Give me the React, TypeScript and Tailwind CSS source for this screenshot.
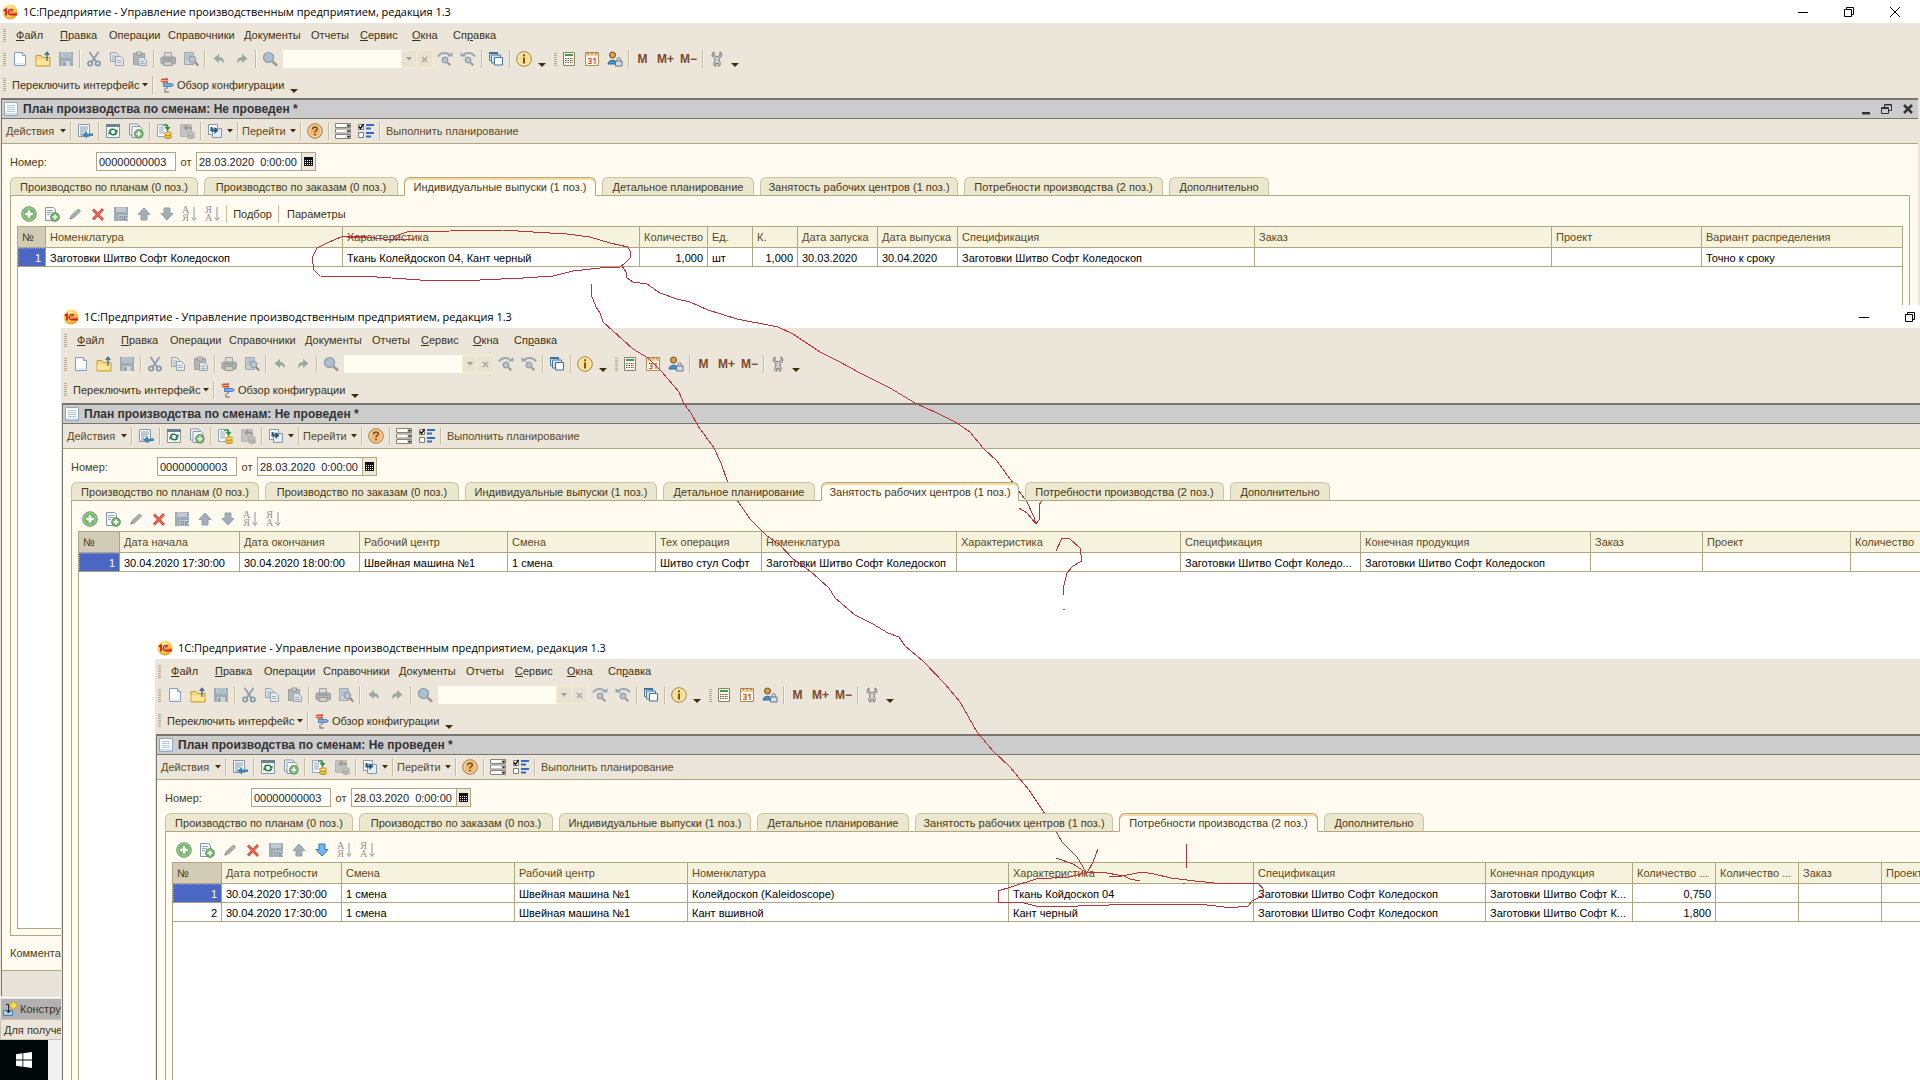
import React, { ReactNode } from "react";

/* ---------- icons ---------- */

function Svg({ children, size = "size-4" }: { children: ReactNode; size?: string }) {
  return (
    <svg viewBox="0 0 16 16" className={`${size} shrink-0`} fill="none" aria-hidden="true">
      {children}
    </svg>
  );
}

const Logo = () => (
  <Svg>
    <defs>
      <radialGradient id="logoFill" cx="0.4" cy="0.3" r="0.8">
        <stop offset="0" stopColor="#fff3b0" />
        <stop offset="0.6" stopColor="#fbc94a" />
        <stop offset="1" stopColor="#d98a2b" />
      </radialGradient>
    </defs>
    <circle cx="8" cy="8" r="7.5" fill="url(#logoFill)" />
    <path d="M1.800 6.800 4 5.200v6.300" stroke="#d6201c" strokeWidth="1.800" />
    <path d="M11.200 6.600A2.800 2.600 0 1 0 9 10.800h6" stroke="#d6201c" strokeWidth="1.500" />
    <path d="M10.300 7.800A1.100 1.100 0 1 0 9 9.200h6" stroke="#d6201c" strokeWidth="0.900" />
  </Svg>
);
const NewDoc = () => (
  <Svg>
    <path d="M2.500 1.500h8l3 3v10h-11z" fill="#fdfeff" stroke="#7f9fbd" />
    <path d="M10.500 1.500v3h3" fill="#d5e4f2" stroke="#7f9fbd" />
    <path d="M4 12h8v1.500H4z" fill="#dce9f5" />
  </Svg>
);
const OpenDoc = () => (
  <Svg>
    <path d="M1 4.500h5l1.500 2H15V15H1z" fill="#f7d774" stroke="#c99a35" />
    <path d="M1.500 8.500H14V14H1.500z" fill="#fce79c" />
    <path d="M12 10V2M9.800 4 12 1.300 14.200 4" stroke="#3e6a86" strokeWidth="1.300" />
  </Svg>
);
const Save = () => (
  <Svg>
    <path d="M1 1h14v14H1z" fill="#9eacb8" />
    <path d="M3 1.500h10v5H3z" fill="#c8cfd5" />
    <path d="M4 3h8M4 5h8" stroke="#9eacb8" />
    <path d="M4 10h8v5H4z" fill="#cfd4d7" />
    <path d="M5 11h2.500v4H5z" fill="#8998a6" />
  </Svg>
);
const Cut = () => (
  <Svg>
    <path d="M3.500 1 10 10.500M12.500 1 6 10.500" stroke="#8fa1b0" strokeWidth="2" />
    <circle cx="4.200" cy="12.500" r="2.200" stroke="#8398ab" strokeWidth="1.700" />
    <circle cx="11.800" cy="12.500" r="2.200" stroke="#8398ab" strokeWidth="1.700" />
  </Svg>
);
const Copy = () => (
  <Svg>
    <path d="M1.500 1.500h5l3 3v6h-8z" fill="#e3e6e6" stroke="#94a6b5" />
    <path d="M3 5h4M3 7h5M3 9h3" stroke="#9fb2c4" />
    <path d="M6.500 5.500h5l3 3v6h-8z" fill="#e9ebea" stroke="#94a6b5" />
    <path d="M8 9.500h4M8 11.500h5" stroke="#9fb2c4" />
  </Svg>
);
const Paste = () => (
  <Svg>
    <path d="M1.500 2.500h11v11h-11z" fill="#b3b5b2" stroke="#9b9f9e" />
    <path d="M4.500 1h5v3h-5z" fill="#d3d3ce" stroke="#8e979e" />
    <path d="M6.500 6.500h5l3 3v5h-8z" fill="#dfe2e2" stroke="#94a6b5" />
    <path d="M8 10.500h4M8 12.500h5" stroke="#9fb2c4" />
  </Svg>
);
const Print = () => (
  <Svg>
    <path d="M4.500 1.500h7v5h-7z" fill="#d9dad7" stroke="#a1a3a3" />
    <rect x="1" y="6" width="14.500" height="7" rx="1.500" fill="#b1b1b0" stroke="#979799" />
    <path d="M4 10.500h8v4H4z" fill="#cfcfcc" stroke="#979799" />
    <path d="M3 8h10" stroke="#8394a0" />
  </Svg>
);
const Preview = () => (
  <Svg>
    <path d="M1.500 1.500h9v12h-9z" fill="#c9d0d4" stroke="#9aa8b4" />
    <path d="M3 4h6M3 6h4M3 8h3" stroke="#9fb2c4" />
    <circle cx="9.500" cy="8.500" r="3.300" fill="#b9c4ce" stroke="#8797a4" />
    <path d="m12 11 3.200 3.600" stroke="#9a8078" strokeWidth="2" />
  </Svg>
);
const Undo = () => (
  <Svg>
    <path d="M2.500 7.500 8 3v3c4 0 5.500 3 4.500 6.500C11.500 10 10.500 9.300 8 9.300V12z" fill="#98aaa0" />
  </Svg>
);
const Redo = () => (
  <Svg>
    <path d="M13.500 7.500 8 3v3C4 6 2.500 9 3.500 12.500 4.500 10 5.500 9.300 8 9.300V12z" fill="#98aaa0" />
  </Svg>
);
const Find = () => (
  <Svg>
    <circle cx="6.500" cy="6.500" r="5" fill="#aebfcd" stroke="#8b9bb0" strokeWidth="1.200" />
    <path d="m10.500 10.500 4.500 4" stroke="#a98f84" strokeWidth="2.500" />
  </Svg>
);
const FindNext = () => (
  <Svg>
    <path d="M1 5.500C4 1 11 1 13 5" stroke="#98a9b4" strokeWidth="2" />
    <path d="M10 5.500h5.500V1z" fill="#98a9b4" />
    <circle cx="8" cy="9" r="3" fill="#b5c1cb" stroke="#8797a4" />
    <path d="m10.500 11.500 2.800 2.800" stroke="#a98f84" strokeWidth="2" />
  </Svg>
);
const FindPrev = () => (
  <Svg>
    <path d="M15 5.500C12 1 5 1 3 5" stroke="#98a9b4" strokeWidth="2" />
    <path d="M6 5.500H.5V1z" fill="#98a9b4" />
    <circle cx="8" cy="9" r="3" fill="#b5c1cb" stroke="#8797a4" />
    <path d="m10.500 11.500 2.800 2.800" stroke="#a98f84" strokeWidth="2" />
  </Svg>
);
const WindowsIcon = () => (
  <Svg>
    <path d="M1.500 1.500h8v8h-8z" fill="#d5e5f0" stroke="#4d7b9f" />
    <path d="M1 1h9v2H1z" fill="#3f7199" />
    <path d="M3.500 4h9v8h-9z" fill="#d5e5f0" stroke="#4d7b9f" />
    <path d="M6.500 6.500h8v7.500h-8z" fill="#fbfdff" stroke="#3f7199" />
  </Svg>
);
const Info = () => (
  <Svg>
    <circle cx="8" cy="8" r="7.300" fill="#f9dd92" stroke="#a9813f" />
    <circle cx="8" cy="8" r="5.800" stroke="#fdf0c0" />
    <path d="M8 3.200v2M8 6.500v6" stroke="#7a5a12" strokeWidth="2" />
  </Svg>
);
const Help = () => (
  <Svg>
    <circle cx="8" cy="8" r="7.300" fill="#f0b878" stroke="#a8814f" />
    <circle cx="8" cy="8" r="5.800" stroke="#fbd9a6" />
    <path d="M5.600 6.300C5.800 3.200 10.600 3.400 10.300 6 10.200 7.500 8 7.600 8 9.600M8 10.800v1.700" stroke="#7b4d1c" strokeWidth="1.600" />
  </Svg>
);
const Calculator = () => (
  <Svg>
    <path d="M2.500 1.500h11v13h-11z" fill="#fffdf3" stroke="#8c8062" />
    <path d="M4 3h8v2H4z" fill="#3f9a4a" />
    <path d="M4 7.500h8M4 9.500h8M4 11.500h8" stroke="#5a5a4c" strokeDasharray="1.500 1" />
    <path d="M11 7v6" stroke="#d9823a" strokeWidth="1.500" strokeDasharray="1 1" />
  </Svg>
);
const Calendar31 = () => (
  <Svg>
    <path d="M1.500 1.500h13v13h-13z" fill="#fffaf0" stroke="#b08a5a" />
    <path d="M2 2h12v3H2z" fill="#f2cf96" />
    <path d="M4 1v2.500M8 1v2.500M12 1v2.500" stroke="#a2713b" />
    <path d="M4 7.500h3v5H4M4.500 10H7M9 8.500l2-1V13" stroke="#d8502c" strokeWidth="1.200" />
  </Svg>
);
const UserLock = () => (
  <Svg>
    <circle cx="5.500" cy="4" r="3" fill="#d9a04b" stroke="#6b4a21" />
    <path d="M1 13c0-5 9-5 9 0z" fill="#4d8fc4" stroke="#2f6a9a" />
    <path d="M8.500 10h6.500v5H8.500z" fill="#d6dde2" stroke="#5f7688" />
    <path d="M10 10V8.500a1.700 1.700 0 0 1 3.400 0V10" stroke="#5f7688" />
  </Svg>
);
const Wrench = () => (
  <Svg>
    <path
      d="M5 .8v3.700l3 1.500 3-1.500V.8c2.500 1.500 2.700 5-.8 6.500v3c2 1.700 1.300 4.900-.9 4.900V12.500H6.800v2.700c-2.300 0-3-3.200-1-4.900v-3C2.300 5.800 2.500 2.300 5 .8z"
      fill="#cfcfcf"
      stroke="#777775"
    />
  </Svg>
);
const Signpost = () => (
  <Svg>
    <path d="M8 1v11" stroke="#8c9097" strokeWidth="1.600" />
    <path d="M6 11.500v3.500h4" stroke="#8c9097" strokeWidth="1.400" />
    <path d="M1 3.500 3 1.500h6v4H3z" fill="#d4502e" />
    <path d="M4 6h8.500l2.500 2-2.500 2H4z" fill="#4b86c8" />
    <path d="M1 3.500h8" stroke="#f4b39f" />
    <path d="M5 8h8" stroke="#b8d3ef" />
  </Svg>
);
const DocIcon = () => (
  <Svg>
    <path d="M1.500 1.500h13v13h-13z" fill="#fcfdff" stroke="#8ea8c0" />
    <path d="M4 4.500h8M4 6.500h8M4 8.500h8M4 10.500h8" stroke="#b4c8dc" />
    <path d="M2 12h12v2H2z" fill="#cfdfee" />
  </Svg>
);
const ListBack = () => (
  <Svg>
    <path d="M1.500 1.500h11v12h-11z" fill="#fbfdff" stroke="#8397aa" />
    <path d="M3 4h8M3 6h8M3 8h6M3 10h3M3 12h3" stroke="#7d93a8" />
    <path d="M16 10.500H10V8L5 11.700 10 15.500V13h6z" fill="#3f87b8" />
  </Svg>
);
const Refresh = () => (
  <Svg>
    <path d="M1.500 1.500h13v13h-13z" fill="#f4faf7" stroke="#8796a1" />
    <path d="M1 1h14v3H1z" fill="#6b8090" />
    <path d="M4.500 8.500C5 5.800 9.500 5.500 11 8M11.500 9.500c-.5 2.700-5 3-6.500.5" stroke="#2c7a4b" strokeWidth="1.500" />
    <path d="M12.500 6v3.500H9zM3.500 12V8.500H7z" fill="#2c7a4b" />
  </Svg>
);
const AddCopy = () => (
  <Svg>
    <path d="M1.500 1h8l2 2v9h-10z" fill="#f2f5f7" stroke="#8397aa" />
    <path d="M4 3.500h8l2 2v9H4z" fill="#fbfcfd" stroke="#8397aa" />
    <circle cx="10.800" cy="10.800" r="4.300" fill="#79b873" stroke="#5b9459" />
    <path d="M10.800 8.300v5M8.300 10.800h5" stroke="#fff" strokeWidth="1.600" />
  </Svg>
);
const PostDoc = () => (
  <Svg>
    <path d="M1.500 1.500h10v12h-10z" fill="#fbfdff" stroke="#93a6b8" />
    <path d="M3 4h5M3 6h5M3 8h5M3 10h5" stroke="#93a6b8" />
    <path d="M7 2c3-1.500 5-.5 5.500 2h2L11.500 8 8.500 4h2C10 3 9 2.500 7 3z" fill="#3b9440" />
    <ellipse cx="12" cy="13.500" rx="3.500" ry="2" fill="#edc23f" stroke="#b98918" />
    <ellipse cx="12" cy="10.500" rx="3.500" ry="1.700" fill="#f8dd75" stroke="#b98918" />
  </Svg>
);
const UnpostDoc = () => (
  <Svg>
    <path d="M1.500 1.500h11v12h-11z" fill="#c3c3c1" stroke="#b4b6b7" />
    <path d="M13 7c0-3-2-4-5-3.500V1L4 4.500 8 8V5.700C10 5.500 11 6 13 7z" fill="#a39a96" />
    <ellipse cx="12" cy="13.500" rx="3.500" ry="2" fill="#b9b8b5" stroke="#a8a8a6" />
    <ellipse cx="12" cy="10.500" rx="3.500" ry="1.700" fill="#c6c5c2" stroke="#a8a8a6" />
  </Svg>
);
const BasedOn = () => (
  <Svg>
    <path d="M1.500 1.500h9v10h-9z" fill="#fbfdff" stroke="#8397aa" />
    <path d="M5.500 5.500h9v9h-9z" fill="#e3eef7" stroke="#8397aa" />
    <path d="M3.500 4v4.500h4V11l4-3.700-4-3.300v2.500H5.500V4z" fill="#27577f" />
  </Svg>
);
const ListSettings = () => (
  <Svg>
    <path d="M.5.5h15v4H.5zM.5 6h15v4H.5zM.5 11.500h15v4H.5z" fill="#fdfdfb" stroke="#83837b" />
    <path d="M11.500 1H15v3h-3.500zM11.500 6.500H15v3h-3.500zM11.500 12H15v3h-3.500z" fill="#b4b4ae" />
    <path d="M12 2h3l-1.500 2zM12 7.500h3l-1.500 2zM12 13h3l-1.500 2z" fill="#1f1f1f" />
  </Svg>
);
const CheckList = () => (
  <Svg>
    <path d="M.5 1.500h5v5h-5zM.5 9.500h5v5h-5z" fill="#fff" stroke="#7d7d78" />
    <path d="m1 3.500 1.500 2 3-4.500" stroke="#111" strokeWidth="1.400" />
    <path d="M8 2h8M8 5.500h5M8 10h8M8 13.500h5" stroke="#2f6cc9" strokeWidth="1.800" />
  </Svg>
);
const AddRow = () => (
  <Svg>
    <circle cx="8" cy="8" r="7.300" fill="#73b46c" stroke="#7c9f74" />
    <circle cx="8" cy="8" r="6" stroke="#a5d69c" />
    <path d="M8 4.200v7.600M4.200 8h7.600" stroke="#fff" strokeWidth="2.600" />
  </Svg>
);
const AddCopyRow = () => (
  <Svg>
    <path d="M1.500 1.500h8l2 2v11h-10z" fill="#f4f7fa" stroke="#8397aa" />
    <path d="M3 4.500h6M3 6.500h5M3 8.500h3" stroke="#93a6b8" />
    <circle cx="11" cy="11" r="4.300" fill="#79b873" stroke="#5b9459" />
    <path d="M11 8.500v5M8.500 11h5" stroke="#fff" strokeWidth="1.600" />
  </Svg>
);
const Pencil = () => (
  <Svg>
    <path d="m2.500 13.500 1-4L10 3.500c1-1 2-1 3 0s.8 2 0 3L6.500 12.500z" fill="#a3aba3" />
    <path d="m2.500 13.500.6-2.400 1.900 1.700z" fill="#7d8580" />
    <path d="m9 4.500 3 3" stroke="#c6cbc2" />
  </Svg>
);
const DeleteRow = () => (
  <Svg>
    <path d="m3 3.500 10 10.500M13 3 3 13.500" stroke="#d9483b" strokeWidth="2.800" />
    <path d="m3.500 4 9 9.500M12.500 3.500l-9 9.500" stroke="#f0897c" strokeWidth="0.800" />
  </Svg>
);
const SaveOk = () => (
  <Svg>
    <path d="M1 1h14v14H1z" fill="#9eacb8" />
    <path d="M3 1.500h10v4.500H3z" fill="#c2cad1" />
    <path d="M5.500 9H15v6H5.500z" fill="#c3cbd1" />
    <path d="M7 10.500h2.500V14H7zM11.500 10v5M14.500 10l-3 2.500 3 2.500" stroke="#8798a6" strokeWidth="1.200" />
  </Svg>
);
const ArrowUp = () => (
  <Svg>
    <path d="m8 2 6 6.500h-3V14H5V8.500H2z" fill="#a1adb7" stroke="#93a0ab" />
  </Svg>
);
const ArrowDown = ({ on }: { on?: boolean }) => (
  <Svg>
    <path d="M8 14 2 7.500h3V2h6v5.500h3z" fill={on ? "#6db6ee" : "#a1adb7"} stroke={on ? "#3673ad" : "#93a0ab"} />
  </Svg>
);

function SortIcon({ top, bottom }: { top: string; bottom: string }) {
  return (
    <span className="flex h-4 items-center gap-0.5">
      <span className="flex flex-col font-['Liberation_Serif',serif] text-[10px] leading-2 text-[#8f8d99]">
        <span>{top}</span>
        <span className="text-[#a58f8c]">{bottom}</span>
      </span>
      <svg viewBox="0 0 5 16" className="h-4 w-1.5" fill="none" aria-hidden="true">
        <path d="M2.500 1v12M.3 11.500l2.200 3 2.200-3" stroke="#8998a6" />
      </svg>
    </span>
  );
}

/* ---------- small parts ---------- */

const IconButton = ({ label, children }: { label: string; children: ReactNode }) => (
  <button type="button" aria-label={label} className="flex h-5 w-[23px] shrink-0 items-center justify-center">
    {children}
  </button>
);

const Sep = () => (
  <span className="flex w-[5px] shrink-0 justify-center">
    <span className="h-[18px] w-0.5 border-l border-[#c4bda0] bg-[#f8f5ec]" />
  </span>
);

const Grip = () => (
  <span className="flex w-[3px] shrink-0 flex-col gap-px">
    {[0, 1, 2, 3, 4, 5, 6].map((i) => (
      <span key={i} className="h-px bg-[#b5ab8e]" />
    ))}
  </span>
);

const Caret = () => (
  <svg viewBox="0 0 6 4" className="h-1 w-1.5 shrink-0" aria-hidden="true">
    <path d="M0 0h6L3 3.500z" fill="#3f2f08" />
  </svg>
);

const Overflow = () => (
  <button type="button" aria-label="Ещё" className="flex h-5 w-[13px] items-end justify-center pb-0.5">
    <svg viewBox="0 0 8 4" className="h-1 w-2" aria-hidden="true">
      <path d="M0 0h8L4 4z" fill="#3f2f08" />
    </svg>
  </button>
);

const menus: { pre: string; key: string; post: string; width: string }[] = [
  { pre: "", key: "Ф", post: "айл", width: "w-[44px]" },
  { pre: "", key: "П", post: "равка", width: "w-[49px]" },
  { pre: "Операции", key: "", post: "", width: "w-[59px]" },
  { pre: "Справочники", key: "", post: "", width: "w-[76px]" },
  { pre: "Документы", key: "", post: "", width: "w-[67px]" },
  { pre: "Отчеты", key: "", post: "", width: "w-[49px]" },
  { pre: "", key: "С", post: "ервис", width: "w-[52px]" },
  { pre: "", key: "О", post: "кна", width: "w-[41px]" },
  { pre: "Сп", key: "р", post: "авка", width: "w-[44px]" },
];

function TitleBar() {
  return (
    <header className="flex h-[23px] shrink-0 items-center bg-white pl-0.5 text-black">
      <Logo />
      <h1 className="ml-[5px] font-['Open_Sans',sans-serif] text-[11px] whitespace-nowrap">
        1С:Предприятие - Управление производственным предприятием, редакция 1.3
      </h1>
      <div className="ml-auto flex pr-0.5">
        <button type="button" aria-label="Свернуть" className="flex h-5 w-[46px] items-center justify-center">
          <svg viewBox="0 0 10 10" className="size-2.5" fill="none" stroke="#000"><path d="M0 5.500h10" /></svg>
        </button>
        <button type="button" aria-label="Восстановить" className="flex h-5 w-[46px] items-center justify-center">
          <svg viewBox="0 0 10 10" className="size-2.5" fill="none" stroke="#000"><path d="M.5 2.500h7v7h-7zM2.500 2.500v-2h7v7h-2" /></svg>
        </button>
        <button type="button" aria-label="Закрыть" className="flex h-5 w-[46px] items-center justify-center">
          <svg viewBox="0 0 10 10" className="size-2.5" fill="none" stroke="#000"><path d="m0 0 10 10M10 0 0 10" /></svg>
        </button>
      </div>
    </header>
  );
}

function MainBars({ id }: { id: string }) {
  return (
    <div className="shrink-0 bg-[#ebe5da]">
      <nav className="flex h-6 items-center pl-[3px]">
        <Grip />
        <span className="w-2.5" />
        {menus.map((m) => (
          <button key={m.pre + m.key + m.post} type="button" className={`${m.width} shrink-0 text-left whitespace-nowrap`}>
            {m.pre}
            {m.key && <u className="underline-offset-1">{m.key}</u>}
            {m.post}
          </button>
        ))}
      </nav>
      <div className="flex h-6 items-center pl-[3px]">
        <Grip />
        <span className="w-0.5" />
        <IconButton label="Новый"><NewDoc /></IconButton>
        <IconButton label="Открыть"><OpenDoc /></IconButton>
        <IconButton label="Сохранить"><Save /></IconButton>
        <Sep />
        <IconButton label="Вырезать"><Cut /></IconButton>
        <IconButton label="Копировать"><Copy /></IconButton>
        <IconButton label="Вставить"><Paste /></IconButton>
        <Sep />
        <IconButton label="Печать"><Print /></IconButton>
        <IconButton label="Просмотр"><Preview /></IconButton>
        <Sep />
        <IconButton label="Отменить"><Undo /></IconButton>
        <IconButton label="Повторить"><Redo /></IconButton>
        <Sep />
        <IconButton label="Найти"><Find /></IconButton>
        <input id={`${id}-find`} aria-label="Поиск" className="ml-0.5 h-[18px] w-[118px] bg-[#fffdf2] px-1" />
        <button type="button" aria-label="История поиска" className="flex h-[18px] w-4 items-center justify-center border border-[#f6ecc6] bg-[#e8e2d5]">
          <svg viewBox="0 0 6 4" className="h-1 w-1.5"><path d="M0 0h6L3 3.500z" fill="#a39c8f" /></svg>
        </button>
        <button type="button" aria-label="Очистить" className="flex h-[18px] w-4 items-center justify-center border border-l-0 border-[#f6ecc6] bg-[#e8e2d5]">
          <svg viewBox="0 0 8 8" className="size-[7px]" stroke="#a39c8f" strokeWidth="1.500"><path d="m1 1 6 6M7 1 1 7" /></svg>
        </button>
        <IconButton label="Найти далее"><FindNext /></IconButton>
        <IconButton label="Найти ранее"><FindPrev /></IconButton>
        <Sep />
        <IconButton label="Окна"><WindowsIcon /></IconButton>
        <Sep />
        <IconButton label="Сведения"><Info /></IconButton>
        <Overflow />
        <span className="w-1.5" />
        <Grip />
        <IconButton label="Калькулятор"><Calculator /></IconButton>
        <IconButton label="Календарь"><Calendar31 /></IconButton>
        <IconButton label="Пользователи"><UserLock /></IconButton>
        <Sep />
        {["M", "M+", "M−"].map((t) => (
          <button key={t} type="button" className="w-[23px] text-center text-xs font-bold text-[#7b4a2c]">{t}</button>
        ))}
        <Sep />
        <IconButton label="Сервис"><Wrench /></IconButton>
        <Overflow />
      </div>
      <div className="flex h-[27px] items-center pl-[3px]">
        <Grip />
        <button type="button" className="ml-1.5 flex w-[138px] items-center gap-0.5 whitespace-nowrap">
          Переключить интерфейс <Caret />
        </button>
        <Sep />
        <button type="button" className="ml-1 flex w-[128px] items-center gap-0.5 whitespace-nowrap">
          <Signpost /> Обзор конфигурации
        </button>
        <Overflow />
      </div>
    </div>
  );
}

function DocTitle() {
  return (
    <div className="flex h-[19px] shrink-0 items-center border-b border-[#77756e] bg-[#cccccc] pl-px text-[#333]">
      <DocIcon />
      <h2 className="ml-1 text-xs font-bold whitespace-nowrap">План производства по сменам: Не проведен *</h2>
      <div className="ml-auto flex items-center gap-2.5 pr-[5px]">
        <button type="button" aria-label="Свернуть документ">
          <svg viewBox="0 0 10 12" className="h-3 w-2.5"><path d="M1 9h8v2.500H1z" fill="#333" /></svg>
        </button>
        <button type="button" aria-label="Восстановить документ">
          <svg viewBox="0 0 12 12" className="size-3" fill="none" stroke="#333">
            <path d="M.5 4.500h7v6h-7zM.5 5.500h7M3.500 4V1.500h7v6H8M3.500 2h7" />
          </svg>
        </button>
        <button type="button" aria-label="Закрыть документ">
          <svg viewBox="0 0 10 10" className="size-2.5" stroke="#333" strokeWidth="2.500"><path d="m1 1 8 8M9 1 1 9" /></svg>
        </button>
      </div>
    </div>
  );
}

function DocToolbar() {
  return (
    <div className="flex h-[25px] shrink-0 items-center border-b border-[#b0a680] bg-[#ebe5da] pl-1 text-[#5c4a1c]">
      <button type="button" className="flex w-[62px] items-center gap-1.5 whitespace-nowrap">
        Действия <Caret />
      </button>
      <Sep />
      <IconButton label="Записать"><ListBack /></IconButton>
      <Sep />
      <IconButton label="Обновить"><Refresh /></IconButton>
      <IconButton label="Скопировать"><AddCopy /></IconButton>
      <Sep />
      <IconButton label="Провести"><PostDoc /></IconButton>
      <IconButton label="Отменить проведение"><UnpostDoc /></IconButton>
      <Sep />
      <button type="button" aria-label="Ввести на основании" className="ml-0.5 flex w-[30px] items-center justify-center gap-1">
        <BasedOn /> <Caret />
      </button>
      <Sep />
      <button type="button" className="ml-0.5 flex w-[56px] items-center gap-1 whitespace-nowrap">
        Перейти <Caret />
      </button>
      <Sep />
      <IconButton label="Справка"><Help /></IconButton>
      <Sep />
      <IconButton label="Настройка списка"><ListSettings /></IconButton>
      <IconButton label="Настройка отбора"><CheckList /></IconButton>
      <Sep />
      <button type="button" className="ml-1 whitespace-nowrap">Выполнить планирование</button>
    </div>
  );
}

const tabs = [
  { title: "Производство по планам (0 поз.)", width: "w-[188px]" },
  { title: "Производство по заказам (0 поз.)", width: "w-[194px]" },
  { title: "Индивидуальные выпуски (1 поз.)", width: "w-[192px]" },
  { title: "Детальное планирование", width: "w-[152px]" },
  { title: "Занятость рабочих центров (1 поз.)", width: "w-[198px]" },
  { title: "Потребности производства (2 поз.)", width: "w-[199px]" },
  { title: "Дополнительно", width: "w-[100px]" },
];

interface Column {
  title: string;
  width?: number;
  right?: boolean;
}

interface Doc {
  id: string;
  active: number;
  extras: boolean;
  canMoveDown: boolean;
  columns: Column[];
  rows: string[][];
}

function RowsTable({ doc }: { doc: Doc }) {
  return (
    <div className="min-h-0 flex-1 overflow-hidden border border-[#b0a680] bg-white">
      <table className="w-full table-fixed border-separate border-spacing-0">
        <colgroup>
          {doc.columns.map((c, i) => (
            <col key={i} style={c.width ? { width: c.width } : undefined} />
          ))}
        </colgroup>
        <thead>
          <tr className="h-[21px]">
            {doc.columns.map((c, i) => (
              <th
                key={i}
                className={`overflow-hidden border-r border-b border-[#b0a680] pl-1 text-left font-normal whitespace-nowrap last:border-r-0 ${
                  i === 0 ? "bg-[#d2ccb6] text-[#3d3520]" : "bg-[#f5f2dd] text-[#5c4a1c]"
                }`}
              >
                {c.title}
              </th>
            ))}
          </tr>
        </thead>
        <tbody className="text-black">
          {doc.rows.map((row, r) => (
            <tr key={r} className="h-[19px]">
              {row.map((cell, i) => (
                <td
                  key={i}
                  className={`truncate border-r border-b border-[#b0a680] px-1 pt-0.5 last:border-r-0 ${
                    doc.columns[i].right ? "text-right" : "text-left"
                  } ${i === 0 && r === 0 ? "bg-[#4c66c4] text-white outline-1 -outline-offset-1 outline-dotted outline-[#a89a5c]" : ""}`}
                >
                  {cell}
                </td>
              ))}
            </tr>
          ))}
        </tbody>
      </table>
    </div>
  );
}

function AppWindow({ doc }: { doc: Doc }) {
  return (
    <section className="flex h-full w-full flex-col bg-[#ebe5da]">
      <TitleBar />
      <MainBars id={doc.id} />
      <div className="mr-0.5 ml-px flex min-h-0 flex-1 flex-col border-t-2 border-l border-[#77756e] bg-[#fffbf0]">
        <DocTitle />
        <DocToolbar />
        <div className="flex min-h-0 flex-1 flex-col px-2 pt-2">
          <div className="flex h-[19px] shrink-0 items-center text-[#4a3c18]">
            <label htmlFor={`${doc.id}-number`} className="w-[86px]">Номер:</label>
            <input
              id={`${doc.id}-number`}
              defaultValue="00000000003"
              className="h-[19px] w-20 border border-[#b0a680] bg-white px-0.5 text-[#22201a]"
            />
            <label htmlFor={`${doc.id}-date`} className="w-5 text-center">от</label>
            <input
              id={`${doc.id}-date`}
              defaultValue="28.03.2020  0:00:00"
              className="h-[19px] w-[106px] border border-[#b0a680] bg-white px-0.5 whitespace-pre text-[#22201a]"
            />
            <button type="button" aria-label="Выбрать дату" className="flex h-[19px] w-3.5 items-center justify-center border border-l-0 border-[#b0a680] bg-[#efe9dc]">
              <svg viewBox="0 0 9 9" className="size-[9px]" fill="none" shapeRendering="crispEdges">
                <path d="M0 0h9v9H0z" fill="#111" />
                <path d="M1 3h1v1H1zM3 3h1v1H3zM5 3h1v1H5zM7 3h1v1H7zM1 5h1v1H1zM3 5h1v1H3zM5 5h1v1H5zM7 5h1v1H7zM1 7h1v1H1zM3 7h1v1H3zM5 7h1v1H5zM7 7h1v1H7z" fill="#fff" />
              </svg>
            </button>
          </div>
          <div role="tablist" className="relative z-10 mt-1.5 -mb-px flex h-[19px] shrink-0 gap-1.5">
            {tabs.map((t, i) => (
              <button
                key={t.title}
                type="button"
                role="tab"
                aria-selected={i === doc.active}
                className={`${t.width} shrink-0 rounded-t-md border text-center whitespace-nowrap text-[#46391a] ${
                  i === doc.active
                    ? "border-[#b0a680] border-b-[#fffbf0] bg-[#fffbf0] shadow-[inset_0_2px_0_#f8d9a0]"
                    : "border-[#c9c3a6] border-b-[#b0a680] bg-[#ece7cf]"
                }`}
              >
                {t.title}
              </button>
            ))}
          </div>
          <div className="flex min-h-0 flex-1 flex-col border border-[#b0a680] px-1.5 pb-1.5">
            <div className="flex h-[30px] shrink-0 items-center pt-1.5 text-[#3d3210]">
              <IconButton label="Добавить"><AddRow /></IconButton>
              <IconButton label="Добавить копированием"><AddCopyRow /></IconButton>
              <IconButton label="Изменить"><Pencil /></IconButton>
              <IconButton label="Удалить"><DeleteRow /></IconButton>
              <IconButton label="Закончить редактирование"><SaveOk /></IconButton>
              <IconButton label="Переместить вверх"><ArrowUp /></IconButton>
              <IconButton label="Переместить вниз"><ArrowDown on={doc.canMoveDown} /></IconButton>
              <IconButton label="Сортировать по возрастанию"><SortIcon top="А" bottom="Я" /></IconButton>
              <IconButton label="Сортировать по убыванию"><SortIcon top="Я" bottom="А" /></IconButton>
              {doc.extras && (
                <>
                  <Sep />
                  <button type="button" className="w-[47px] text-center">Подбор</button>
                  <Sep />
                  <button type="button" className="ml-1.5">Параметры</button>
                </>
              )}
            </div>
            <RowsTable doc={doc} />
          </div>
          <label className="flex h-[34px] shrink-0 items-center gap-5 text-[#4a3c18]">
            Комментарий:
            <input className="h-[19px] flex-1 border border-[#b0a680] bg-white" />
          </label>
        </div>
        <footer className="h-[26px] shrink-0 border-t border-[#b0a680] bg-[#e8e3d8]" />
      </div>
      <div className="mt-px flex h-[22px] shrink-0 items-center border-t border-white bg-[#ebe5da]">
        <button type="button" className="ml-px flex h-5 w-[220px] items-center gap-0.5 bg-[#b1b1b1] pl-px whitespace-nowrap text-[#3b3322]">
          <svg viewBox="0 0 16 16" className="size-4" fill="none">
            <path d="M1.500 9.500h9v5h-9z" fill="#a9d3ee" stroke="#4784ad" />
            <path d="M4 3.500h2.500V11M4.500 9.500l2 2.500 2-2.500" stroke="#222" />
            <path d="M11.500.5 15.500 4.500l-4 4-4-4z" fill="#fbdc4d" stroke="#caa127" />
          </svg>
          Конструктор отчетов
        </button>
      </div>
      <p className="flex h-[21px] shrink-0 items-center border border-[#c9c3b0] pl-[3px] whitespace-nowrap text-[#3b3322]">
        Для получения подсказки нажмите F1
      </p>
    </section>
  );
}

/* ---------- data ---------- */

const product = "Заготовки Шитво Софт Коледоскоп";

const releases: Doc = {
  id: "releases",
  active: 2,
  extras: true,
  canMoveDown: false,
  columns: [
    { title: "№", width: 28, right: true },
    { title: "Номенклатура", width: 297 },
    { title: "Характеристика", width: 297 },
    { title: "Количество", width: 68, right: true },
    { title: "Ед.", width: 45 },
    { title: "К.", width: 45, right: true },
    { title: "Дата запуска", width: 80 },
    { title: "Дата выпуска", width: 80 },
    { title: "Спецификация", width: 297 },
    { title: "Заказ", width: 297 },
    { title: "Проект", width: 150 },
    { title: "Вариант распределения" },
  ],
  rows: [["1", product, "Ткань Колейдоскоп 04, Кант черный", "1,000", "шт", "1,000", "30.03.2020", "30.04.2020", product, "", "", "Точно к сроку"]],
};

const workload: Doc = {
  id: "workload",
  active: 4,
  extras: false,
  canMoveDown: false,
  columns: [
    { title: "№", width: 41, right: true },
    { title: "Дата начала", width: 120 },
    { title: "Дата окончания", width: 120 },
    { title: "Рабочий центр", width: 148 },
    { title: "Смена", width: 148 },
    { title: "Тех операция", width: 106 },
    { title: "Номенклатура", width: 195 },
    { title: "Характеристика", width: 224 },
    { title: "Спецификация", width: 180 },
    { title: "Конечная продукция", width: 230 },
    { title: "Заказ", width: 112 },
    { title: "Проект", width: 148 },
    { title: "Количество", right: true },
  ],
  rows: [
    ["1", "30.04.2020 17:30:00", "30.04.2020 18:00:00", "Швейная машина №1", "1 смена", "Шитво стул Софт", product, "", "Заготовки Шитво Софт Коледо...", product, "", "", ""],
  ],
};

const needs: Doc = {
  id: "needs",
  active: 5,
  extras: false,
  canMoveDown: true,
  columns: [
    { title: "№", width: 49, right: true },
    { title: "Дата потребности", width: 120 },
    { title: "Смена", width: 173 },
    { title: "Рабочий центр", width: 173 },
    { title: "Номенклатура", width: 321 },
    { title: "Характеристика", width: 245 },
    { title: "Спецификация", width: 232 },
    { title: "Конечная продукция", width: 147 },
    { title: "Количество ...", width: 83, right: true },
    { title: "Количество ...", width: 83, right: true },
    { title: "Заказ", width: 83 },
    { title: "Проект" },
  ],
  rows: [
    ["1", "30.04.2020 17:30:00", "1 смена", "Швейная машина №1", "Колейдоскоп (Kaleidoscope)", "Ткань Койдоскоп 04", product, "Заготовки Шитво Софт К...", "0,750", "", "", ""],
    ["2", "30.04.2020 17:30:00", "1 смена", "Швейная машина №1", "Кант вшивной", "Кант черный", product, "Заготовки Шитво Софт К...", "1,800", "", "", ""],
  ],
};

/* Freehand red pen marks linking the three windows. */
const penStrokes = [
  "347,237 367,237 383,239 413,239 393,239 395,236 407,232 450,231 503,230 533,232 550,233 567,234 590,237 610,243 628,247 631,253 630,258 625,263 620,267 600,268 573,271 553,276 523,278 480,280 420,280 377,277 320,276 314,270 312,258 317,248 327,243 343,236 367,237",
  "622,266 626,272 627,278 633,282 647,284 660,293 677,299 690,302 708,310 737,319 778,327 793,334 820,352 840,362 860,373 890,388 915,403 937,413 957,423 970,432 983,448 997,461 1013,483 1027,502 1034,517 1036,524",
  "1019,508 1027,513 1036,524 1039,520 1039,505 1045,496",
  "1056,551 1062,538 1070,539 1080,548 1082,561 1073,566 1067,573 1064,585 1063,595",
  "1063,609 1065,609",
  "591,284 591,294 596,307 600,313 603,322 633,349 648,358 662,372 679,392 684,404 691,413 698,426 714,448 721,463 728,483 737,500 750,519 767,536 780,545 793,559 810,571 829,588 835,598 855,615 873,624 888,633 899,637 905,646 923,661 945,684 960,702 977,732 993,751 1010,767 1029,790 1047,817 1054,828 1062,842 1077,857 1086,872",
  "1056,858 1073,864 1087,873 1093,862 1098,849",
  "1109,876 1122,876 1142,872 1154,874 1171,878 1195,881 1224,884 1232,883 1258,883 1264,890 1262,896 1252,901 1248,906 1238,907 1224,907 1199,904 1126,904 1109,905 1048,907 1036,906 1024,903 998,902 998,891 1011,887 1036,879 1069,877 1085,873 1101,872 1124,876 1130,879 1140,881",
  "1186,844 1186,868",
  "1183,883 1185,883",
];

export default function App() {
  return (
    <main className="relative flex h-screen flex-col overflow-hidden bg-white font-['Liberation_Sans',Arial,sans-serif] text-[11px] leading-4 text-[#3f3213]">
      <div className="min-h-0 flex-1">
        <AppWindow doc={releases} />
      </div>
      <div className="flex h-10 shrink-0 bg-[#f0f0f0]">
        <button type="button" aria-label="Пуск" className="flex w-12 items-center justify-center bg-[#01090b]">
          <svg viewBox="0 0 16 16" className="size-4" fill="#fff">
            <path d="M0 2.200 6.500 1.300v6.200H0zM7.300 1.200 16 0v7.500H7.300zM0 8.400h6.500v6.300L0 13.800zM7.300 8.400H16V16l-8.700-1.200z" />
          </svg>
        </button>
      </div>
      <div className="absolute top-[305px] left-[61px] h-[calc(100vh-40px)] w-full">
        <AppWindow doc={workload} />
      </div>
      <div className="absolute top-[636px] left-[155px] h-[calc(100vh-40px)] w-full">
        <AppWindow doc={needs} />
      </div>
      <svg
        viewBox="0 0 1920 1080"
        className="pointer-events-none absolute top-0 left-0 h-[1080px] w-[1920px] max-w-none"
        fill="none"
        stroke="#b9323a"
        shapeRendering="crispEdges"
        aria-hidden="true"
      >
        {penStrokes.map((p) => (
          <polyline key={p} points={p} strokeLinejoin="round" />
        ))}
      </svg>
    </main>
  );
}
